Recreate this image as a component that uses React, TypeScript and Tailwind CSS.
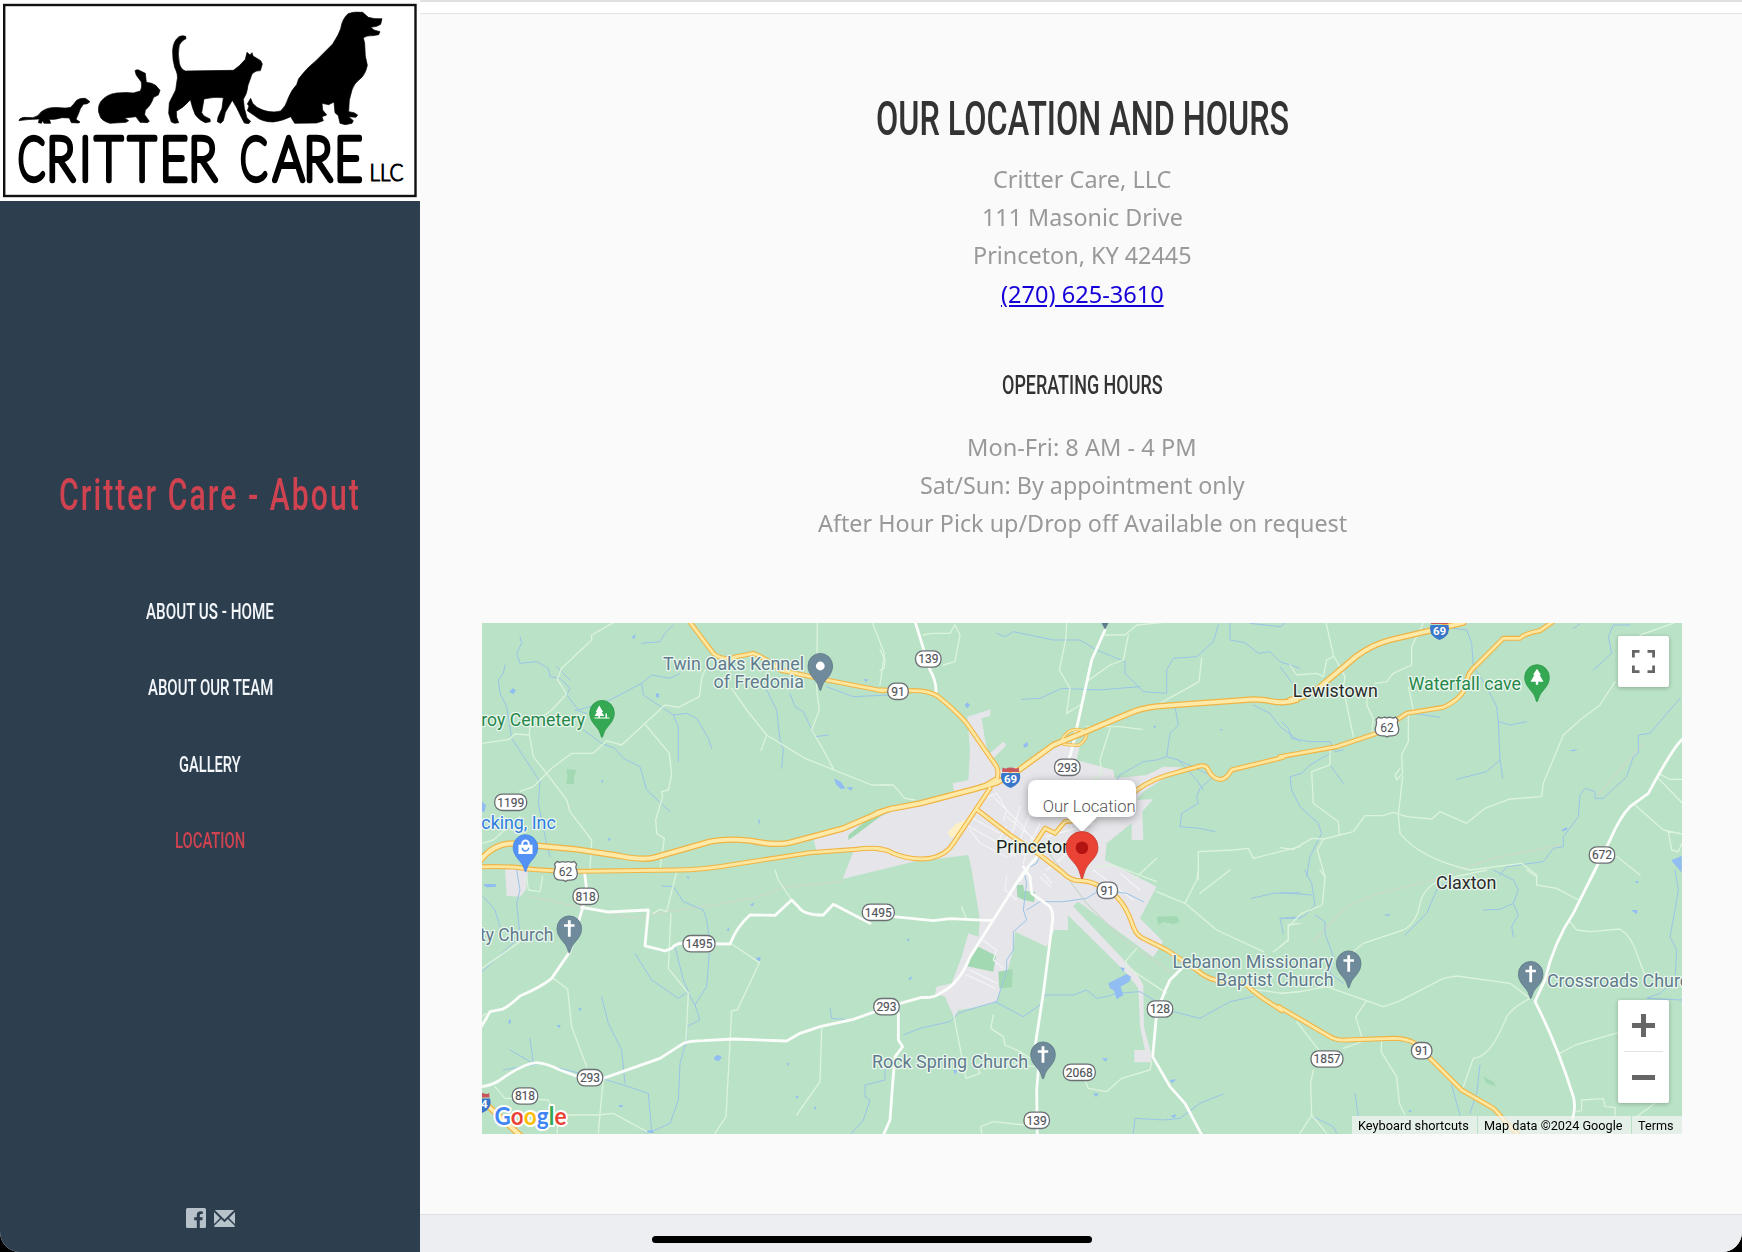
import { useLayoutEffect, useRef, useState, type ReactNode } from "react";

/** Text condensed horizontally so that it fills exactly the given width. */
function Condensed({ width, className = "", children }: { width: number; className?: string; children: ReactNode }) {
  const ref = useRef<HTMLSpanElement>(null);
  const [scale, setScale] = useState(1);
  useLayoutEffect(() => {
    if (ref.current) setScale(width / ref.current.offsetWidth);
  }, [width]);
  return (
    <span className="inline-block text-left whitespace-nowrap" style={{ width }}>
      <span ref={ref} className={`inline-block origin-left ${className}`} style={{ transform: `scaleX(${scale})` }}>
        {children}
      </span>
    </span>
  );
}

function Logo() {
  return (
    <svg viewBox="0 0 420 201" className="block h-[201px] w-[420px] bg-white">
      <rect x="4.2" y="5" width="411.3" height="191" fill="#fff" stroke="#111" strokeWidth="2.4" />
      <g transform="scale(0.33333)" fill="#000" stroke="#000" strokeWidth="2" strokeLinejoin="round">
        <path d="M57 362Q58 354 72 352L98 353Q115 350 124 335Q145 319 180 323Q200 326 212 322Q222 312 230 301Q240 293 256 295L270 305L262 311L250 313Q240 325 236 340L228 358L240 366L236 369L214 368L208 354L186 353Q165 360 148 358L152 370L132 370L128 362L124 370L115 368L118 357Q80 358 57 362Z" />
        <path d="M405 212Q412 206 420 212L436 220L439 247Q456 248 467 256L480 271L475 285L461 292Q452 318 436 330L434 344L448 364L442 368L420 367L408 350L374 354L386 362L378 367L330 370Q302 362 299 345Q290 325 302 305Q320 282 350 279Q380 276 400 279L421 273Q427 262 424 246L409 226Z" />
        <path d="M557 109Q548 105 537 110Q520 122 518 150Q517 180 524 202Q536 226 531 242L527 270L508 308L506 340L514 366L524 370L536 368L530 352L529 334Q552 322 571 299L578 324L586 345Q600 362 616 368L631 365L630 357L612 348L605 338L612 297Q640 290 670 293L666 325L654 352L652 365L662 370L670 362L676 337L697 301Q712 325 722 348L733 369L746 371L752 364L741 354L733 325L730 298Q742 280 744 256L756 222Q768 210 781 212L787 192L782 182L759 168L756 158L750 165L741 157L736 178Q718 200 700 211L556 213Q542 208 538 190Q532 160 538 135Q545 121 558 116Z" />
        <path d="M752 295L758 310L771 322Q806 342 842 333Q858 318 864 296Q874 270 890 254L896 236Q920 204 948 182L998 132L1014 105L1022 86Q1026 58 1044 41Q1060 34 1088 37L1105 52Q1125 58 1146 56L1142 73L1130 79L1112 82L1122 90L1140 95L1136 104L1118 107Q1102 106 1090 113L1094 130L1096 168L1102 196Q1096 225 1080 237Q1062 250 1056 270L1048 300L1046 335L1062 338L1073 345L1068 352L1046 350L1060 362L1056 370L1036 374L1020 370L1015 347L1005 338L1002 306L986 314L966 310L968 330L980 345L966 350L970 362L950 369L884 370L872 350Q850 362 820 366Q785 366 765 348L742 332L747 318L742 312Z" />
      </g>
      <g fill="#000" stroke="#000" strokeLinejoin="round" strokeLinecap="round" fontFamily="Lato, sans-serif">
        <g fontSize="59.5" fontWeight="100" strokeWidth="6.4">
          <g transform="scale(0.66 1)">
            <text x="27.3" y="180.5">C</text>
            <text x="364" y="180.5">C</text>
          </g>
          <g transform="scale(0.8 1)">
            <text x="58 99.5 119 160.5 200 235.5" y="180.5">RITTER</text>
            <text x="342 379.8 418" y="180.5">ARE</text>
          </g>
        </g>
        <text x="369.5" y="181" fontSize="22.5" fontWeight="300" strokeWidth="1.1" textLength="34" lengthAdjust="spacingAndGlyphs">LLC</text>
      </g>
    </svg>
  );
}

type Tile = "A" | "B" | "C" | "D" | "E" | "F";
const origin: Record<Tile, [number, number]> = {
  A: [470, 610],
  B: [470, 870],
  C: [880, 610],
  D: [880, 870],
  E: [1280, 610],
  F: [1280, 870],
};
type Layer = Partial<Record<Tile, string>>;

const interstate: Layer = {
  A: "M25 760Q65 700 130 700L210 708L320 718L450 738Q520 752 555 742L720 695Q770 685 840 692Q920 708 960 698L1120 655L1236 605",
  C: "M-10 610L30 597L120 580L280 538L350 518L410 485L520 405L600 372L760 305Q800 290 860 287L1120 268Q1150 268 1170 273Q1215 282 1250 270",
  E: "M30 270Q80 262 115 235L230 138Q275 105 330 90L450 62L550 38",
  B: "M40 695L160 805",
};
const highway: Layer = {
  A: "M25 771Q80 768 140 772Q200 783 330 784L620 780Q700 780 800 762L1020 728L1160 718Q1200 712 1235 717M655 30L730 130Q760 155 800 140L850 130Q880 140 930 180L1060 208L1200 235L1240 243",
  C: "M-5 717Q20 718 40 730Q90 752 150 745Q200 735 220 700Q260 640 290 595L330 535M0 240L90 242Q145 240 175 260Q230 305 260 340L350 470Q360 495 345 520M290 598L390 675L480 735L545 785Q575 815 605 812M465 700L495 655L525 670L555 635L600 630L700 590L770 540Q820 505 880 490L960 468Q980 465 985 480Q1000 510 1025 508Q1040 505 1055 480L1210 442M310 530L345 508",
  D: "M605 32Q640 35 660 50L710 80Q740 110 760 170Q770 200 800 210L860 240L950 300Q990 335 1040 335L1100 345Q1130 375 1180 405L1205 422",
  E: "M0 440L170 410L290 370L380 310L490 292Q550 265 560 220Q560 190 590 165L670 85L720 85Q735 70 780 62L820 34",
  F: "M-4 410L150 500Q170 512 200 510L340 505Q380 505 405 520L450 565L545 660L640 715Q655 730 680 760L720 800",
};
const ramps: Layer = {
  C: "M545 390Q562 358 590 358L622 364M552 403L594 406Q612 400 620 376",
};
const whiteRoads: Layer = {
  B: "M25 650Q60 650 90 630Q160 580 200 578Q230 580 270 600L330 622L400 625L570 565L640 520Q660 512 700 512L790 507L950 513L990 490L1050 470L1150 448L1215 425M343 0L350 60M345 90L330 140L300 245L245 325Q215 350 150 378Q110 415 95 418L60 425L33 472M335 112L415 126L535 120L525 228L585 243L605 235Q620 218 640 220L780 222Q800 170 840 135L915 136L965 90L985 110Q1000 135 1060 135L1090 103L1200 160",
  C: "M105 34L150 180Q172 220 167 252M675 60L635 150L580 400L568 445M490 720L445 770L420 810",
  D: "M435 0L330 165L270 260Q240 340 180 370Q160 385 125 382L60 400M40 140L160 152L210 146L340 152M430 -10L450 20L455 70L510 110Q520 125 518 150L490 370L465 530L475 600L470 660L472 800M55 430L55 510L68 530L45 560L38 640L30 750L8 800M910 290L870 330Q840 390 828 450L818 560L870 650L915 700L968 800",
  E: "M1210 385Q1180 410 1105 550L1050 590Q1020 620 990 690L930 810",
  F: "M945 0L880 130Q820 220 795 330Q780 360 765 395Q830 520 880 680Q888 710 878 745",
};
const lanes: Layer = {
  A: "M430 38L365 75L365 90L275 175L262 208L290 252L245 300L180 345L178 375L135 372L118 388L36 400M178 375L190 440L230 490L290 570L300 605L365 690L360 780M150 545L190 530L245 475L305 430L370 430L410 392L455 405L585 285L625 292L688 260L695 205L705 180M527 345L598 430L605 495L595 540L575 545L578 560L557 630L560 670L583 685L570 780M785 235L830 300L890 375L1005 445L1205 525L1260 525M890 375L873 422M1042 38L1040 240L1048 300L1025 360L1060 420L1093 482M1207 38L1243 130L1230 225M36 700L70 690L150 620",
  B: "M170 20L175 60L210 65L218 20M250 325L293 358L305 470L350 590M620 5L590 125L570 118L550 130M603 130L595 295L655 370L648 510M785 222L868 278L802 420L785 422L768 740L735 790M915 0L925 30L965 90M1055 475L1050 635L980 735M36 295L150 215M75 650L105 685L235 690L262 740L262 790M262 735L385 735L430 730L530 785M400 630L390 730L385 790M36 440L48 430",
  C: "M560 38L558 85L538 180L570 235L560 310L600 285M130 75L155 70L210 70L225 45L240 75L225 155L190 165M675 75L735 75L770 45L845 38M745 75L730 150L690 165L620 215M965 145L957 215L840 280M620 350L720 350L785 358M690 355L660 450L665 490L640 510M0 118L15 150L12 175L0 182M0 525L40 525L75 565L105 570M955 810L955 725L1060 720L1105 715L1120 745L1260 710M650 770L700 765L830 815M760 810L830 745",
  D: "M955 0L950 30L915 100L1010 180L1150 245M1260 160L1225 165L1225 210L1180 245M960 70L1050 0M830 65L915 100M770 235L738 272L740 290L860 370M340 435L332 475L370 500L375 525L420 545L460 570M222 440L258 625L300 610L290 585L330 580L470 590M615 630L625 655L680 665L725 625L810 600L815 575M305 790L302 770L340 755L435 765M1100 355L1205 370L1260 365M245 110L260 150",
  E: "M138 38L160 135L195 200L190 235L220 380M30 165L50 195L110 190L130 200L140 150L160 140M430 40L395 110L395 165L340 190L320 215L285 220M275 370L280 325L260 285L262 260M385 230L400 300L385 320L385 395L365 435L368 490L350 510L345 495L360 475M368 500L355 615L360 670Q420 745 570 780L725 760L770 795M0 713L40 718L95 685L130 687L220 665L255 617L310 617L340 607L380 620L455 627L480 605L560 640L615 595L690 567L785 560L790 520L850 375L900 330L960 285L1005 215M95 485L150 465L150 420M95 485L100 580L175 635L178 675M130 687L112 720L135 800M1080 75L1180 40M1135 490L1170 508L1206 508M1135 505L1206 578M1065 585L1150 660L1206 672M1165 665L1175 720L1195 725L1206 700M1005 735L1080 795",
  F: "M120 0L135 20L127 105L65 130L25 170L25 210L0 230M220 245L250 220L370 180Q410 160 420 100Q430 55 480 30L620 0M0 370L60 365L140 350L310 410L355 395L490 325L530 318L690 340L750 385Q700 410 680 440Q640 540 600 560L580 565L550 650M258 395L227 440L245 500M50 455L120 545M100 600L92 640L95 735L60 790M95 735L140 790M245 515L190 535M305 515L303 545L350 620L358 700L375 735M740 0L770 20L770 45L830 55L895 90M870 155L890 180L930 185L1020 177Q1055 200 1070 250L1100 330M840 550L885 525L1015 488M890 725L905 722L905 690L970 686L975 710L1005 712L1005 735M1070 740L1125 700",
};
const streams: Layer = {
  A: "M150 80L155 100L140 130L150 160L200 155L235 175L240 200L270 205L300 235L290 255L325 300L360 290L420 270L515 220L545 195L600 205L630 190M515 220L520 255L610 315L625 350L625 455M610 315L650 310L680 325L715 385L725 415M105 165L100 190L85 210L90 250L110 290L125 385L210 515L205 580L225 680L240 740M340 360L395 400L435 415L460 445L510 470L530 540L600 605M515 100L570 95L585 70L610 45M890 240L920 300L930 390L940 420L935 475M960 250L975 290L1000 305L1035 380L1075 375M1070 230L1150 260L1260 255M260 170L300 210M315 300L350 310",
  B: "M140 0L150 60L140 100L150 200L36 305M40 80L75 120L90 170M575 48L610 50L640 95L700 120L710 150L720 220L710 350L675 405L690 450L650 470L650 510L630 580L625 690L600 760L545 785L535 670L460 645L410 630L210 580L100 600M615 230L640 330L655 365L625 385L545 330L495 250M675 405L655 370M395 380L415 460L455 540L465 640M120 540L190 580L180 505M1245 600L1245 630L1185 645L1185 680L1200 690L1180 750L1145 790M1080 415L1085 445L1125 448",
  C: "M350 70L375 80L400 65L520 90L600 90L650 120L735 155L735 190L790 245L860 250L860 180L880 145L950 140L1000 95L1015 45M425 268L480 265L545 235L655 240L780 230M1050 40L1050 90L1095 98L1135 130L1170 125L1200 155L1260 175M1120 285L1170 310L1200 350L1260 395M885 290L895 345L870 370L860 440L830 450L790 455L720 495L705 520L680 530M860 440L895 450L950 510L970 540M895 450L1000 500L960 535L950 560L955 580L905 610L900 650L960 655L1005 665M1110 40L1200 50L1215 40M430 780L470 760L480 735",
  D: "M430 0L440 40L430 120L440 150L400 185L400 240L380 270L380 300L355 380L350 395L290 412L235 430L210 455L120 475L70 495M440 120L480 95L550 95L620 85L660 60L740 70L790 95M345 395L430 440L480 405L495 375L580 375L620 360L650 385L680 380L710 370L780 365L880 425L960 445L1050 395L1120 380M1115 85L1180 70L1260 68M1260 145L1200 145L1210 190M760 790L765 745L850 750L900 745L960 700L1030 672",
  E: "M5 335L25 355L35 385L90 395L150 395L165 425L190 420M150 430L90 465L65 490L30 500L35 540L60 590L115 640L125 670L90 740L80 800M150 465L190 520M520 55L560 60L575 100L580 170L620 230L650 290L655 335L660 450L620 485L530 508M655 335L690 345L740 335M660 450L668 505M400 310L480 322M1200 265L1110 370L1075 375L1075 430L1060 440L1040 500L970 565L945 565L945 545L915 535L900 555L895 620L850 680L850 710L820 715L790 755L680 770L660 795M1050 45L1000 45L985 80L995 130L940 180M880 55L900 42M0 170L30 210L60 250",
  F: "M75 0L95 40L105 105L70 140L0 145M0 68L95 75M105 135L135 155L135 190L160 260L150 310L190 340M375 195L440 130L470 60L520 20M640 0L700 30L715 60L700 100L660 118L610 120M700 100L715 135L695 170L700 200M1185 0L1195 60L1185 120L1170 200L1190 240L1185 330L1140 370L1100 385L1206 390M600 585L590 670L570 730M515 645L530 700L540 735M225 670L235 740M100 740L160 770L170 790",
};
const ponds: Layer = {
  A: "M118 245l10-10l10 6l-8 12zM485 82l12-10l-4 16zM558 250l10 2l-2 12l-8-4zM1092 505l20 10l14 20l-14 2l-14-14zM1130 532l20 0l-8 10zM36 575l12 10l-4 20l-8 0zM1180 208l14 0l-6 8zM865 625l5 8l-3 14zM415 683l8 5l-8 6zM393 510l8 2l-5 8z",
  B: "M40 42l38 0l0 8l-30 2zM115 455l6-10l2 12l-6 6zM260 465l12 0l-4 10zM732 562l12-8l12 8l-10 12l-12-4zM860 262l12 0l-2 12l-10-4zM840 105l14-8l-6 12zM770 180l8-10l-2 14zM445 705l16 0l-10 8zM515 785l30 -5l8 10zM950 580l8 0l-4 8zM975 678l12 2l-6 6zM1030 712l10 0l-4 8zM650 18l8 4l-4 6zM325 413l10 3l-6 8z",
  C: "M254 285l8-8l8 8l-8 10zM430 405l12-10l2 14l-12 4zM820 348l8 0l-4 8zM1020 357l8 0l-4 6z",
  D: "M685 340L740 312L753 320L748 335L722 350L730 375L710 388L702 362L690 355ZM720 292l14 2l-4 12zM665 565l18 0l-6 10zM870 630l20 -2l-14 12zM640 670l16 0l-8 12zM872 738l16 -6l-4 12zM85 325l12-6l-6 12zM220 600l12 0l-6 14zM80 206l8 0l-2 10z",
  E: "M1175 750l30-12l0 50l-12-15l-14-15zM868 422l26-6l-12 8zM845 660l14-8l4 6l-14 6z",
  F: "M1053 120l20 0l-4 12zM312 134l20 -2l-8 6zM385 720l12 2l-8 6zM1065 33l10 0l-4 8z",
};
const urban: Layer = {
  C: "M-200 685L-60 640L30 597L130 575L225 560L218 520L265 510L270 420L262 320L332 298L330 318L305 325L315 390L327 432L370 395L380 405L335 450L360 480L420 470L560 395L600 405L590 450L700 480L705 505L800 495L850 470L905 472L830 520L790 545L770 570L820 567L787 605L790 690L755 690L755 640L680 700L675 750L830 830L780 925L850 995L820 1042L595 875L563 900L565 960L523 960L500 1010L405 965L402 1010L382 1085L355 1160L350 1175L290 1192L235 1200L222 1222L195 1160L165 1150L170 1130L215 1120L245 1040L265 970L295 980L300 930L275 780L265 735L100 755L-112 807L-75 712L-190 725Z",
  A: "M105 775L175 775L168 840L150 860L110 858Z",
  D: "M562 112L575 104L770 310L790 345L792 470L812 545L815 577L763 577L763 540L795 540L780 470L775 355L740 310L560 132Z",
};
const parks: Layer = {
  A: "M290 478L320 480L312 500L312 522L288 522L292 500Z",
  C: "M-95 690L-80 680L0 620L25 608L28 600L-20 615L-95 675Z",
  D: "M295 230L348 257L340 305L258 288ZM355 305L398 297L396 352L358 355ZM410 45L430 45L432 62L466 66L462 96L430 90L412 80ZM830 140L890 138L900 155L880 162L850 155L835 165Z",
  F: "M610 620L640 635L648 650L620 640Z",
};
const townStreets: Layer = {
  C: "M300 570L350 550L380 600L370 630M250 640L340 690L410 740M270 620L360 670M380 620L480 700M340 560L420 640L460 690M420 590L400 660L350 720M450 610L420 690L390 740M380 650L350 700M480 640L440 720L430 760M360 700L430 735L520 720M500 680L640 640M270 660L300 700L380 740M500 780L600 700M560 620L580 660M640 510L620 600",
  D: "M270 300L350 340M260 315L345 355M300 205L350 240L340 270L370 295M480 20L510 50M490 10L515 40M380 20L375 60L410 90M720 10L780 60M640 0L760 90",
};
const railways: Layer = {
  B: "M180 80L260 97L500 145L560 130L760 100L860 82L940 52L1115 35",
  D: "M500 -60L620 100L720 200L880 310",
  E: "M510 790L640 745L840 705M950 560L1090 400",
  F: "M100 215L200 110L280 75L470 28",
};

function Paths({ layer, ...rest }: { layer: Layer } & React.SVGProps<SVGPathElement>) {
  return (
    <>
      {(Object.keys(layer) as Tile[]).map((t) => (
        <path
          key={t}
          d={layer[t]}
          transform={`translate(${origin[t][0]} ${origin[t][1]}) scale(0.33333)`}
          fill="none"
          strokeLinejoin="round"
          strokeLinecap="round"
          {...rest}
        />
      ))}
    </>
  );
}

const routes: [string, number, number][] = [
  ["139", 928.3, 659],
  ["91", 898, 691.3],
  ["293", 1067.3, 767.3],
  ["1199", 510.7, 802.3],
  ["818", 585.7, 896.3],
  ["1495", 699, 943.7],
  ["1495", 878.3, 912.3],
  ["91", 1107.3, 890.3],
  ["293", 886.5, 1006.7],
  ["293", 590, 1077.7],
  ["818", 525, 1096],
  ["128", 1160, 1009],
  ["2068", 1079.3, 1072.3],
  ["139", 1036.7, 1120.3],
  ["1857", 1327, 1059],
  ["91", 1421.7, 1050.7],
  ["672", 1602, 855],
];

function RouteShield({ n, x, y }: { n: string; x: number; y: number }) {
  const w = n.length === 2 ? 20.5 : n.length === 3 ? 25.5 : 32;
  return (
    <g>
      <rect x={x - w / 2} y={y - 8.2} width={w} height={16.4} rx={7.6} fill="#fff" stroke="#6b6f73" strokeWidth="1.3" />
      <text x={x} y={y + 4.2} fontSize="12" textAnchor="middle" fill="#505357" stroke="#505357" strokeWidth="0.15">
        {n}
      </text>
    </g>
  );
}

function UsShield({ x, y }: { x: number; y: number }) {
  return (
    <g transform={`translate(${x} ${y})`}>
      <path
        d="M-8.5-10.2Q-6-8.6-4-9.8Q-2-10.5 0-9.3Q2-10.5 4-9.8Q6-8.6 8.5-10.2L11-7.5Q9.6-5 10.8-2Q12.8 3 10.4 6.4Q8.5 8.8 4.5 8.6Q1.5 8.4 0 9.8Q-1.5 8.4-4.5 8.6Q-8.5 8.8-10.4 6.4Q-12.8 3-10.8-2Q-9.6-5-11-7.5Z"
        fill="#fff"
        stroke="#6b6f73"
        strokeWidth="1.3"
      />
      <text y="4.4" fontSize="12" textAnchor="middle" fill="#505357">62</text>
    </g>
  );
}

function InterstateShield({ x, y, n }: { x: number; y: number; n: string }) {
  return (
    <g transform={`translate(${x} ${y})`}>
      <path d="M-8.5-5.5L-8.2-10Q-6-8.6-4-9.2Q-2-10.6 0-9.8Q2-10.6 4-9.2Q6-8.6 8.2-10L8.5-5.5Z" fill="#c9565b" />
      <path d="M-9-4.5L9-4.5Q10.4 0 8.5 4Q6 8.2 0 10.4Q-6 8.2-8.5 4Q-10.4 0-9-4.5Z" fill="#3877c9" />
      <text y="5.3" fontSize="11.5" fontWeight="700" textAnchor="middle" fill="#fff">{n}</text>
    </g>
  );
}

function Pin({ x, y, color, rim, children }: { x: number; y: number; color: string; rim: string; children?: ReactNode }) {
  return (
    <g transform={`translate(${x} ${y})`}>
      <path d="M0 24.5C-.8 24.5-1.3 21-3 17.5C-5.5 13-12.3 8.5-12.3 0A12.3 12.6 0 0 1 12.3 0C12.3 8.5 5.5 13 3 17.5C1.3 21 .8 24.5 0 24.5Z" fill={color} stroke={rim} strokeWidth="0.8" />
      {children}
    </g>
  );
}

const Cross = () => <path d="M-1.4-8.3H1.4V-4.2H5.2V-1.8H1.4V8.3H-1.4V-1.8H-5.2V-4.2H-1.4Z" fill="#fff" />;

const labels: { t: string; x: number; y: number; w?: number; c: string; s?: number }[] = [
  { t: "Twin Oaks Kennel", x: 663, y: 669.6, w: 141, c: "#5f7b8c" },
  { t: "of Fredonia", x: 713.6, y: 687.6, w: 90.4, c: "#5f7b8c" },
  { t: "roy Cemetery", x: 481.3, y: 726, w: 103.7, c: "#27874b" },
  { t: "cking, Inc", x: 481.3, y: 829, w: 74.5, c: "#2f7de1" },
  { t: "ty Church", x: 480, y: 941.4, w: 73.4, c: "#5f7b8c" },
  { t: "Princeton", x: 996, y: 853.3, w: 76, c: "#222", s: 18.5 },
  { t: "Lewistown", x: 1292.8, y: 696.5, w: 85, c: "#2b2b2b" },
  { t: "Waterfall cave", x: 1408.5, y: 690, w: 112.5, c: "#27874b" },
  { t: "Claxton", x: 1436, y: 889, w: 60.5, c: "#2b2b2b" },
  { t: "Lebanon Missionary", x: 1172.4, y: 967.6, w: 160.6, c: "#5f7b8c" },
  { t: "Baptist Church", x: 1216, y: 985.5, w: 117.6, c: "#5f7b8c" },
  { t: "Crossroads Church", x: 1547, y: 986.7, w: 152, c: "#5f7b8c" },
  { t: "Rock Spring Church", x: 872, y: 1067.5, w: 156, c: "#5f7b8c" },
];

function MapCanvas() {
  return (
    <svg viewBox="482 623 1200 511" className="block h-[511px] w-[1200px]" fontFamily="Roboto, sans-serif">
      <rect x="482" y="623" width="1200" height="511" fill="#b9e2c6" />
      <Paths layer={urban} fill="#e5e5ea" />
      <Paths layer={parks} fill="#a3d9b2" />
      <Paths layer={townStreets} stroke="#f5f5f7" strokeWidth={3.4} />
      <path d="M948 832l8-8l10-4l-2 12l-14 6z" fill="#fcf0c4" />
      <Paths layer={railways} stroke="#ccd9cb" strokeWidth={3.5} />
      <Paths layer={streams} stroke="#9bc4e8" strokeWidth={3} />
      <Paths layer={ponds} fill="#91bdf2" />
      <Paths layer={lanes} stroke="#dcf3dc" strokeWidth={4} />
      <Paths layer={whiteRoads} stroke="#fbfdfa" strokeWidth={8.5} />
      <Paths layer={ramps} stroke="#f0b445" strokeWidth={10} />
      <Paths layer={highway} stroke="#f0b445" strokeWidth={15} />
      <Paths layer={interstate} stroke="#f0b445" strokeWidth={19} />
      <Paths layer={ramps} stroke="#fde79f" strokeWidth={5} />
      <Paths layer={highway} stroke="#fde79f" strokeWidth={8.5} />
      <Paths layer={interstate} stroke="#fdeaa8" strokeWidth={11.5} />

      {routes.map(([n, x, y], i) => (
        <RouteShield key={i} n={n} x={x} y={y} />
      ))}
      <UsShield x={565.6} y={871.6} />
      <UsShield x={1387} y={727.3} />
      <InterstateShield x={1010.6} y={777.5} n="69" />
      <InterstateShield x={1439.5} y={629.5} n="69" />
      <InterstateShield x={481} y={1103} n="24" />

      {labels.map((l) => (
        <text
          key={l.t}
          x={l.x}
          y={l.y}
          fontSize={l.s ?? 17.5}
          fill={l.c}
          stroke="#eaf7ee"
          strokeWidth="2.6"
          strokeLinejoin="round"
          paintOrder="stroke"
          textLength={l.w}
          lengthAdjust="spacingAndGlyphs"
        >
          {l.t}
        </text>
      ))}

      <path d="M1101.5 623L1108.5 623L1105 629.5Z" fill="#5f7b8c" />
      <Pin x={820.3} y={666} color="#6f8a9a" rim="#5d7888">
        <circle r="4.4" fill="#fff" />
      </Pin>
      <Pin x={602} y={713} color="#34a853" rim="#2a9748">
        <path d="M-2.8-7.5L1.2-1H-.2L2.2 3H-2V4.4H3.5V.5H5V4.4H7.5V5.6H-7.5V4.4H-3.6V3H-7.5L-5-1H-6.3Z" fill="#fff" />
      </Pin>
      <Pin x={1537} y={677.3} color="#34a853" rim="#2a9748">
        <path d="M0-8.5L4-2.5H2.5L6.5 4.5H1.2V7.5H-1.2V4.5H-6.5L-2.5-2.5H-4Z" fill="#fff" />
      </Pin>
      <Pin x={525.5} y={847.3} color="#5491f5" rim="#4484ea">
        <path d="M-7-2.5H-4.2V-3.5A4.2 4.2 0 0 1 4.2-3.5V-2.5H7V6.8H-7Z" fill="#fff" />
        <path d="M-2.3-2.5V-3.6A2.3 2.3 0 0 1 2.3-3.6V-2.5Z" fill="#5491f5" />
        <path d="M-3.2 .5A3.2 3.2 0 0 0 3.2 .5" fill="none" stroke="#5491f5" strokeWidth="1.5" />
      </Pin>
      <Pin x={569.3} y={928.5} color="#6f8a9a" rim="#5d7888"><Cross /></Pin>
      <Pin x={1043} y={1054.5} color="#6f8a9a" rim="#5d7888"><Cross /></Pin>
      <Pin x={1348.7} y={963.5} color="#6f8a9a" rim="#5d7888"><Cross /></Pin>
      <Pin x={1530.7} y={974} color="#6f8a9a" rim="#5d7888"><Cross /></Pin>

      <g className="drop-shadow-[0_2px_4px_rgba(0,0,0,0.35)]">
        <path d="M1037 780H1127Q1136 780 1136 789V808Q1136 817 1127 817H1097L1082 832L1067 817H1037Q1028 817 1028 808V789Q1028 780 1037 780Z" fill="#fff" />
      </g>
      <text x="1042.7" y="811.7" fontSize="16.5" fontWeight="300" fill="#555" textLength="93" lengthAdjust="spacingAndGlyphs">Our Location</text>

      <path d="M1082 879C1081 879 1080.5 873 1077.5 867.5C1074 861 1066 857 1066 847.5A16 16 0 0 1 1098 847.5C1098 857 1090 861 1086.5 867.5C1083.5 873 1083 879 1082 879Z" fill="#ea4335" stroke="#c5392d" strokeWidth="0.8" />
      <circle cx="1082" cy="847.8" r="6.3" fill="#b31412" />

      <text
        x="494.5"
        y="1124.5"
        fontSize="25"
        fontFamily="Lato, sans-serif"
        fontWeight="700"
        stroke="#fff"
        strokeWidth="4"
        strokeLinejoin="round"
        paintOrder="stroke"
        textLength="72"
        lengthAdjust="spacingAndGlyphs"
      >
        <tspan fill="#4285f4">G</tspan>
        <tspan fill="#ea4335">o</tspan>
        <tspan fill="#fbbc04">o</tspan>
        <tspan fill="#4285f4">g</tspan>
        <tspan fill="#34a853">l</tspan>
        <tspan fill="#ea4335">e</tspan>
      </text>
    </svg>
  );
}

function MapWidget() {
  return (
    <div className="relative h-[511px] w-[1200px] overflow-hidden">
      <MapCanvas />
      <button className="absolute top-[13px] right-[13px] flex size-[51px] items-center justify-center rounded-[2px] bg-white shadow-[0_1px_4px_rgba(0,0,0,0.25)]">
        <svg viewBox="0 0 23 23" className="size-[23px]" fill="none" stroke="#666" strokeWidth="2.8">
          <path d="M1.4 7.5V1.4H7.5M15.5 1.4H21.6V7.5M21.6 15.5V21.6H15.5M7.5 21.6H1.4V15.5" />
        </svg>
      </button>
      <div className="absolute right-[13px] bottom-[31px] flex h-[103px] w-[51px] flex-col items-center rounded-[2px] bg-white shadow-[0_1px_4px_rgba(0,0,0,0.25)]">
        <button className="flex h-[51px] w-full items-center justify-center">
          <svg viewBox="0 0 23 23" className="size-[23px]" fill="none" stroke="#666" strokeWidth="5">
            <path d="M0 11.5H23M11.5 0V23" />
          </svg>
        </button>
        <div className="h-px w-[39px] bg-[#e3e3e3]" />
        <button className="flex h-[51px] w-full items-center justify-center">
          <span className="h-[5px] w-[23px] bg-[#666]" />
        </button>
      </div>
      <div className="absolute right-0 bottom-0 flex h-[18px] gap-px font-[Roboto,sans-serif] text-[13px] leading-[19px] text-black">
        <span className="bg-[#f5f5f5]/70 pr-2 pl-[6px]"><Condensed width={111}>Keyboard shortcuts</Condensed></span>
        <span className="bg-[#f5f5f5]/70 pr-2 pl-[6px]"><Condensed width={139}>Map data ©2024 Google</Condensed></span>
        <span className="bg-[#f5f5f5]/70 pr-2 pl-[6px]"><Condensed width={36}>Terms</Condensed></span>
      </div>
    </div>
  );
}

const nav = [
  { label: "ABOUT US - HOME", width: 128, color: "text-[#f3f7fa]" },
  { label: "ABOUT OUR TEAM", width: 125, color: "text-[#f3f7fa]" },
  { label: "GALLERY", width: 62, color: "text-[#f3f7fa]" },
  { label: "LOCATION", width: 70, color: "text-[#cf4250]" },
];

function Sidebar() {
  return (
    <aside className="flex h-full w-[420px] shrink-0 flex-col items-center bg-[#2d3e4f]">
      <Logo />
      <h2 className="mt-[264px] h-[60px] font-[Roboto,sans-serif] text-[44px] leading-[60px] font-medium text-[#cf4250]">
        <Condensed width={302} className="tracking-[3px]">Critter Care - About</Condensed>
      </h2>
      <nav className="mt-[48px] flex flex-col items-center">
        {nav.map((n) => (
          <a key={n.label} className={`flex h-[76.5px] items-center font-[Roboto,sans-serif] text-[22px] font-medium ${n.color}`}>
            <Condensed width={n.width}>{n.label}</Condensed>
          </a>
        ))}
      </nav>
      <div className="mt-auto mb-[24px] flex items-center gap-2">
        <svg viewBox="0 0 20 20" className="size-5">
          <path fill="#b8c2cb" d="M1.5 0H18.5Q20 0 20 1.5V18.5Q20 20 18.5 20H13.8V12.3H16.3L16.7 9.3H13.8V7.5Q13.8 6.1 15.3 6.1H16.8V3.4L14.6 3.3Q10.8 3.3 10.8 7V9.3H8.2V12.3H10.8V20H1.5Q0 20 0 18.5V1.5Q0 0 1.5 0Z" />
        </svg>
        <svg viewBox="0 0 21 17" className="h-[17px] w-[21px]" fill="#b8c2cb">
          <path d="M.8 0H20.2L10.5 9.5ZM0 2L6 8L0 14ZM21 2L15 8L21 14ZM7.2 9L10.5 12.2L13.8 9L21 16Q20.8 17 20 17H1Q.2 17 0 16Z" />
        </svg>
      </div>
    </aside>
  );
}

export default function App() {
  return (
    <div className="h-[1252px] w-[1742px] overflow-hidden bg-black">
      <div className="relative flex h-full w-full overflow-hidden rounded-b-[20px] bg-[#fafafa]">
        <Sidebar />
        <main className="flex h-full flex-1 flex-col text-center">
          <div className="h-[14px] w-full shrink-0 border-t-2 border-b border-t-[#e0e0e0] border-b-[#e4e4e4] bg-white" />
          <div className="flex flex-1 flex-col items-center pl-[2px]">
            <h1 className="mt-[75px] h-[60px] font-[Roboto,sans-serif] text-[48px] leading-[60px] font-medium text-[#333]">
              <Condensed width={413}>OUR LOCATION AND HOURS</Condensed>
            </h1>
            <div className="mt-[11px] flex flex-col items-center font-['Noto_Sans',sans-serif] text-[24px] leading-[38.2px] text-[#999]">
              <Condensed width={178}>Critter Care, LLC</Condensed>
              <Condensed width={201}>111 Masonic Drive</Condensed>
              <Condensed width={219}>Princeton, KY 42445</Condensed>
              <a className="text-[#1500d8]">
                <Condensed width={163} className="underline">(270) 625-3610</Condensed>
              </a>
            </div>
            <h3 className="mt-[52px] h-[40px] font-[Roboto,sans-serif] text-[26px] leading-[40px] font-medium text-[#333]">
              <Condensed width={161}>OPERATING HOURS</Condensed>
            </h3>
            <div className="mt-[23px] flex flex-col items-center font-['Noto_Sans',sans-serif] text-[24px] leading-[38.2px] text-[#999]">
              <Condensed width={230}>Mon-Fri: 8 AM - 4 PM</Condensed>
              <Condensed width={325}>Sat/Sun: By appointment only</Condensed>
              <Condensed width={529}>After Hour Pick up/Drop off Available on request</Condensed>
            </div>
            <div className="mt-auto mb-[80px]">
              <MapWidget />
            </div>
          </div>
          <footer className="flex h-[38px] w-full shrink-0 border-t border-[#dfe0e3] bg-[#eceef1] pt-[21px] pl-[232px]">
            <div className="h-[7px] w-[440px] rounded-full bg-black" />
          </footer>
        </main>
      </div>
    </div>
  );
}
